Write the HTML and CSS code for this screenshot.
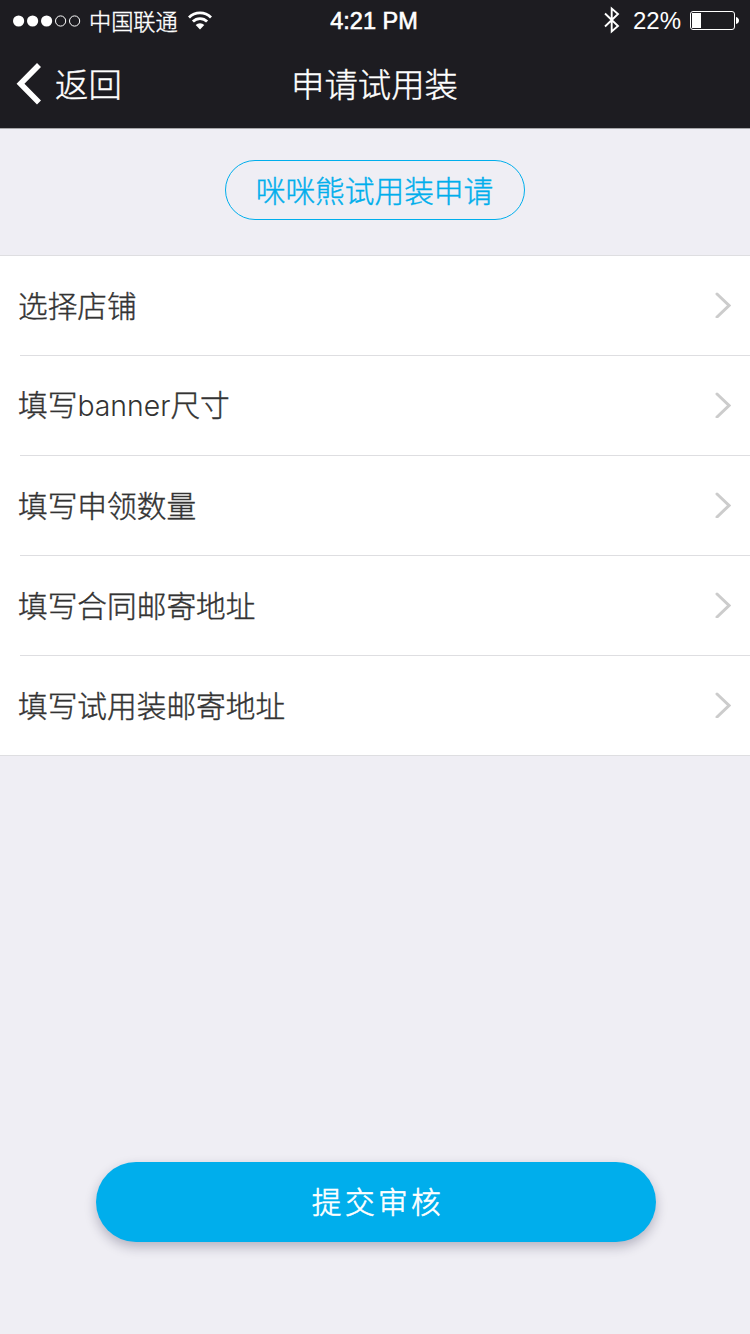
FILE: index.html
```html
<!DOCTYPE html>
<html lang="zh-CN">
<head>
<meta charset="utf-8">
<title>申请试用装</title>
<link rel="stylesheet" href="styles.css">
</head>
<body>
<header class="header">
  <div class="status">
    <div class="status-left">
      <svg class="signal" width="68" height="12" viewBox="0 0 68 12">
        <g fill="#fff"><circle cx="5.6" cy="6" r="5.6"/><circle cx="19.6" cy="6" r="5.6"/><circle cx="33.6" cy="6" r="5.6"/></g>
        <g fill="none" stroke="#fff"><circle cx="47.6" cy="6" r="5.1"/><circle cx="61.6" cy="6" r="5.1"/></g>
      </svg>
      <span class="carrier">中国联通</span>
      <svg class="wifi" width="24" height="19" viewBox="0 0 24 19">
        <g fill="none" stroke="#fff" stroke-width="2.8"><path d="M1 6.5A15.6 15.6 0 0 1 23 6.5"/><path d="M4.9 10.5A10 10 0 0 1 19.1 10.5"/></g>
        <path fill="#fff" d="M7.7 14.1a6.1 6.1 0 0 1 8.6 0L12 18.4z"/>
      </svg>
    </div>
    <span class="time">4:21 PM</span>
    <div class="status-right">
      <svg class="bluetooth" width="16" height="28" viewBox="0 0 16 28"><path fill="none" stroke="#fff" stroke-width="1.9" d="M1 7.500l13 12.500-6.300 5.500V2.500L14 8 1 20.500"/></svg>
      <span class="percent">22%</span>
      <svg class="battery" width="49" height="19" viewBox="0 0 49 19">
        <rect x=".5" y=".5" width="44" height="18" rx="2.5" fill="none" stroke="#fff"/>
        <path fill="#fff" d="M2 2h9v15H2zM46 6q3 1 3 3.500t-3 3.500z"/>
      </svg>
    </div>
  </div>
  <nav class="nav">
    <a class="back">
      <svg width="26" height="42" viewBox="0 0 26 42"><path fill="none" stroke="#fff" stroke-width="5.600" d="M23 2L4.500 20.700 23 39.500"/></svg>
      <span>返回</span>
    </a>
    <h1 class="title">申请试用装</h1>
  </nav>
</header>
<main class="main">
  <div class="intro"><span class="pill">咪咪熊试用装申请</span></div>
  <ul class="list">
    <li class="row"><span>选择店铺</span><svg class="chevron" width="16" height="26" viewBox="0 0 16 26"><path d="M2 2L14 13.500 2 25"/></svg></li>
    <li class="row"><span>填写<span class="latin">banner</span>尺寸</span><svg class="chevron" width="16" height="26" viewBox="0 0 16 26"><path d="M2 2L14 13.500 2 25"/></svg></li>
    <li class="row"><span>填写申领数量</span><svg class="chevron" width="16" height="26" viewBox="0 0 16 26"><path d="M2 2L14 13.500 2 25"/></svg></li>
    <li class="row"><span>填写合同邮寄地址</span><svg class="chevron" width="16" height="26" viewBox="0 0 16 26"><path d="M2 2L14 13.500 2 25"/></svg></li>
    <li class="row"><span>填写试用装邮寄地址</span><svg class="chevron" width="16" height="26" viewBox="0 0 16 26"><path d="M2 2L14 13.500 2 25"/></svg></li>
  </ul>
  <button class="submit">提交审核</button>
</main>
</body>
</html>
```

FILE: styles.css
```css
* { box-sizing: border-box; }
body {
  margin: 0;
  min-height: 1334px;
  display: flex;
  flex-direction: column;
  background: #efeef4;
  color: #333;
  font-family: "Noto Sans CJK SC", sans-serif;
  font-weight: 300;
  -webkit-text-stroke: 0.4px currentColor;
}
svg { display: block; flex: none; }
.header {
  height: 129px;
  background: #1d1c21;
  border-bottom: 1px solid #a6a6a9;
  color: #fff;
}
.status {
  height: 40px;
  display: grid;
  grid-template-columns: 1fr auto 1fr;
  align-items: center;
  padding: 0 11px 0 13px;
  line-height: 40px;
}
.status-left, .status-right { display: flex; align-items: center; }
.status-right { justify-content: flex-end; }
.signal { margin-top: 1px; }
.carrier { margin-left: 8px; font-size: 22.2px; height: 40px; line-height: 40px; }
.wifi { margin-left: 10px; }
.time, .percent { font-family: "Liberation Sans", sans-serif; height: 40px; line-height: 42px; }
.time { padding-right: 4px; font-size: 23.5px; -webkit-text-stroke: 0.6px #fff; }
.percent { margin: 0 9px 0 13px; font-size: 24px; -webkit-text-stroke: 0; }
.nav {
  height: 88px;
  display: grid;
  grid-template-columns: 1fr auto 1fr;
  align-items: center;
  padding: 0 16px;
}
.back { display: flex; align-items: center; gap: 13px; font-size: 33.4px; line-height: 48px; }
.back span, .title { padding-bottom: 2px; }
.title { margin: 0; padding-right: 1px; font-size: 33.4px; font-weight: 300; line-height: 48px; }
.main { display: flex; flex-direction: column; }
.intro { height: 126px; display: flex; justify-content: center; padding-top: 31px; }
.pill {
  width: 300px;
  height: 60px;
  padding-right: 1px;
  border: 1px solid #00aeec;
  border-radius: 30px;
  color: #00aeec;
  font-size: 29.7px;
  line-height: 57px;
  text-align: center;
}
.list { list-style: none; margin: 0; padding: 0 0 0 20px; background: #fff; border: solid #dedee1; border-width: 1px 0; }
.row {
  height: 100px;
  display: flex;
  align-items: center;
  justify-content: space-between;
  padding: 0 19px 2px 0;
  border-bottom: 1px solid #dedee1;
  font-size: 29.7px;
  line-height: 44px;
}
.row > span { margin-left: -2px; }
.row:last-child { height: 99px; padding-bottom: 1px; border-bottom: 0; }
.latin { font-family: Inter, "Liberation Sans", sans-serif; font-size: 28.4px; -webkit-text-stroke: 0; }
.chevron path { fill: none; stroke: #ccc; stroke-width: 3; stroke-linecap: round; }
.submit {
  width: 560px;
  height: 80px;
  margin: 406px 0 0 96px;
  padding: 0 0 2px 4px;
  border: 0;
  border-radius: 40px;
  background: #00aeec;
  box-shadow: 0 5px 12px rgba(30, 25, 60, 0.28);
  color: #fff;
  font-family: inherit;
  font-size: 29.7px;
  font-weight: 300;
  -webkit-text-stroke: 0.6px #fff;
  letter-spacing: 3.4px;
  line-height: 78px;
}
```
